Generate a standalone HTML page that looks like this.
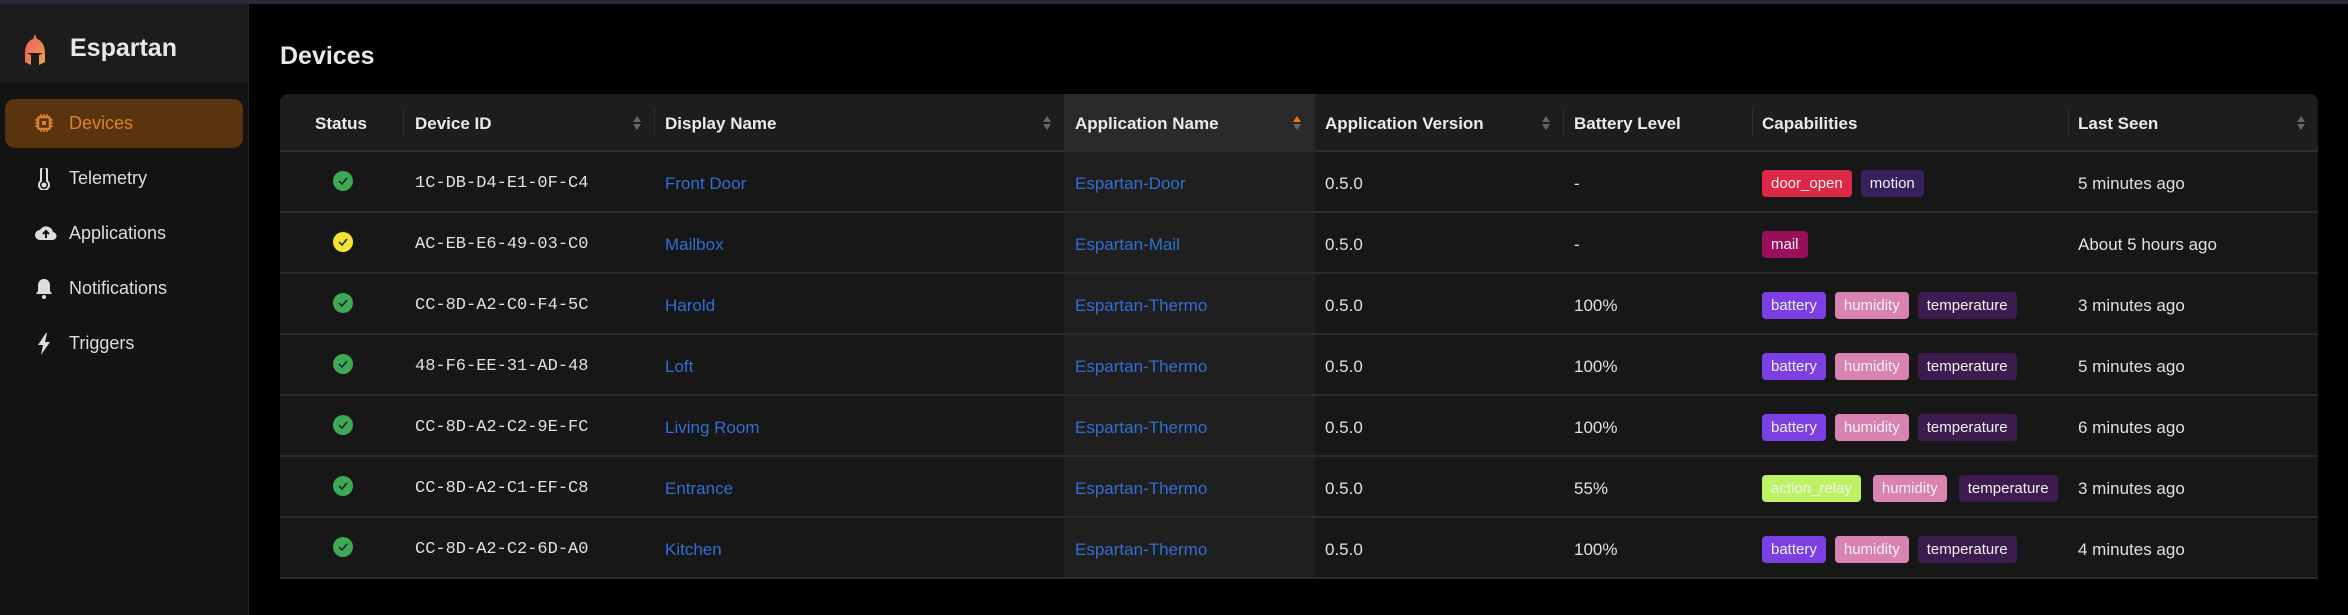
<!DOCTYPE html>
<html><head><meta charset="utf-8"><style>
*{box-sizing:border-box;margin:0;padding:0}
body{width:2348px;height:615px;background:#000;font-family:"Liberation Sans",sans-serif;color:#e5e5e5;position:relative;overflow:hidden}
.topbar{position:absolute;left:0;top:0;width:2348px;height:4px;background:#2b2a36}
.side{position:absolute;left:0;top:4px;width:249px;height:611px;background:#131313;border-right:1px solid #222}
.sh{height:79px;background:#1c1c1c;position:relative}
.sh .t{position:absolute;left:70px;top:30px;font-size:25px;font-weight:bold;color:#e8e8e8}
.nav{position:absolute;left:5px;width:238px;height:49px;border-radius:10px;font-size:18px;color:#ddd}
.nav span{position:absolute;left:64px;top:14px}
.nav svg{position:absolute;left:30px;top:14px}
.nav.act{background:#5a340f;color:#d9822b}
h1{position:absolute;left:280px;top:42px;font-size:25px;font-weight:bold;color:#e8e8e8}
.tbl{position:absolute;left:280px;top:94px;width:2038px;height:485px;background:#171717;border-radius:8px 8px 0 0;overflow:hidden}
.hl{position:absolute;left:784px;top:0;width:251px;height:485px;background:#1f1f1f}
.hdr{position:absolute;left:0;top:0;width:2038px;height:58px;background:#1d1d1d;border-bottom:2px solid #2e2e2e}
.hdr .hlh{position:absolute;left:784px;top:0;width:251px;height:58px;background:#2a2a2a}
.c{position:absolute;font-size:17px;white-space:nowrap}
.hdr .c{font-weight:bold;top:20px;color:#eaeaea}
.dv{position:absolute;top:15px;width:1px;height:28px;background:#2c2c2c}
.sort{position:absolute;top:21px;width:10px;height:16px}
.row{position:absolute;left:0;width:2038px;height:61px;border-bottom:2px solid #2a2a2a}
.row .c{top:22px;color:#e0e0e0}
.mono{font-family:"Liberation Mono",monospace;font-size:17px}
a{color:#2f6fd3;text-decoration:none}
.b{display:inline-block;height:27px;line-height:27px;padding:0 9px;border-radius:4px;font-size:15px;color:#f0f0f0;margin-right:9px;position:relative;top:-4px}
.st{position:absolute;left:53px;top:19px}
</style></head><body>
<div class="topbar"></div>
<div class="side">
 <div class="sh">
  <svg style="position:absolute;left:24px;top:30px" width="22" height="32" viewBox="0 0 22 32"><defs><linearGradient id="g" x1="0" y1="0" x2="1" y2="1"><stop offset="0" stop-color="#e85d5d"/><stop offset="1" stop-color="#f0a050"/></linearGradient></defs><path d="M11 0 L13 5 C19 7 21 13 21 20 L21 28 L15 31 L15 21 L19 19 L3 19 L7 21 L7 31 L1 28 L1 20 C1 13 3 7 9 5 Z" fill="url(#g)"/></svg>
  <div class="t">Espartan</div>
 </div>
 <div class="nav act" style="top:95px"><svg width="18" height="20" viewBox="0 0 18 20"><rect x="3" y="4" width="12" height="12" rx="2" fill="none" stroke="#d9822b" stroke-width="2.5"/><rect x="7" y="8" width="4" height="4" fill="#d9822b"/><path d="M6 1v3M9 1v3M12 1v3M6 16v3M9 16v3M12 16v3M0 7h3M0 10h3M0 13h3M15 7h3M15 10h3M15 13h3" stroke="#d9822b" stroke-width="1.5"/></svg><span>Devices</span></div>
 <div class="nav" style="top:150px"><svg width="18" height="22" viewBox="0 0 18 22"><path d="M6 2a3 3 0 0 1 6 0v11a5 5 0 1 1-6 0z" fill="none" stroke="#ddd" stroke-width="2"/><circle cx="9" cy="17" r="2.5" fill="#ddd"/></svg><span>Telemetry</span></div>
 <div class="nav" style="top:205px"><svg width="22" height="20" viewBox="0 0 22 20"><path d="M5 17a5 5 0 0 1 0-10a7 7 0 0 1 13 2a4 4 0 0 1-1 8z" fill="#ddd"/><path d="M11 15v-6M8 11l3-3 3 3" stroke="#131313" stroke-width="2" fill="none"/></svg><span>Applications</span></div>
 <div class="nav" style="top:260px"><svg width="18" height="22" viewBox="0 0 18 22"><path d="M9 1c4 0 6 3 6 7v5l2 3H1l2-3V8c0-4 2-7 6-7z" fill="#ddd"/><circle cx="9" cy="19" r="2" fill="#ddd"/></svg><span>Notifications</span></div>
 <div class="nav" style="top:315px"><svg width="18" height="22" viewBox="0 0 18 22"><path d="M11 0L3 12h5l-2 10 9-13h-5l2-9z" fill="#ddd"/></svg><span>Triggers</span></div>
</div>
<h1>Devices</h1>
<div class="tbl">
 <div class="hl"></div>
 <div class="hdr"><div class="hlh"></div>
  <div class="c" style="left:35px">Status</div>
  <div class="dv" style="left:123px"></div><div class="c" style="left:135px">Device ID</div>
  <svg class="sort" style="left:352px" viewBox="0 0 10 16"><path d="M5 1l4 6H1z" fill="#666"/><path d="M5 15l4-6H1z" fill="#666"/></svg>
  <div class="dv" style="left:374px"></div><div class="c" style="left:385px">Display Name</div>
  <svg class="sort" style="left:762px" viewBox="0 0 10 16"><path d="M5 1l4 6H1z" fill="#666"/><path d="M5 15l4-6H1z" fill="#666"/></svg>
  <div class="c" style="left:795px">Application Name</div>
  <svg class="sort" style="left:1012px" viewBox="0 0 10 16"><path d="M5 1l4 6H1z" fill="#e07b1a"/><path d="M5 15l4-6H1z" fill="#666"/></svg>
  <div class="c" style="left:1045px">Application Version</div>
  <svg class="sort" style="left:1261px" viewBox="0 0 10 16"><path d="M5 1l4 6H1z" fill="#666"/><path d="M5 15l4-6H1z" fill="#666"/></svg>
  <div class="dv" style="left:1283px"></div><div class="c" style="left:1294px">Battery Level</div>
  <div class="dv" style="left:1472px"></div><div class="c" style="left:1482px">Capabilities</div>
  <div class="dv" style="left:1788px"></div><div class="c" style="left:1798px">Last Seen</div>
  <svg class="sort" style="left:2016px" viewBox="0 0 10 16"><path d="M5 1l4 6H1z" fill="#666"/><path d="M5 15l4-6H1z" fill="#666"/></svg>
 </div>
 <div class="row" style="top:58px"><svg class="st" width="20" height="20"><circle cx="10" cy="10" r="10" fill="#3ea853"/><path d="M6 10l3 3 5-6" stroke="#123" stroke-width="1.5" fill="none"/></svg><div class="c mono" style="left:135px">1C-DB-D4-E1-0F-C4</div><div class="c" style="left:385px"><a>Front Door</a></div><div class="c" style="left:795px"><a>Espartan-Door</a></div><div class="c" style="left:1045px">0.5.0</div><div class="c" style="left:1294px">-</div><div class="c" style="left:1482px"><span class="b" style="background:#dc2846">door_open</span><span class="b" style="background:#36205e">motion</span></div><div class="c" style="left:1798px">5 minutes ago</div></div>
 <div class="row" style="top:119px"><svg class="st" width="20" height="20"><circle cx="10" cy="10" r="10" fill="#f3e234"/><path d="M6 10l3 3 5-6" stroke="#123" stroke-width="1.5" fill="none"/></svg><div class="c mono" style="left:135px">AC-EB-E6-49-03-C0</div><div class="c" style="left:385px"><a>Mailbox</a></div><div class="c" style="left:795px"><a>Espartan-Mail</a></div><div class="c" style="left:1045px">0.5.0</div><div class="c" style="left:1294px">-</div><div class="c" style="left:1482px"><span class="b" style="background:#9a0f5c">mail</span></div><div class="c" style="left:1798px">About 5 hours ago</div></div>
 <div class="row" style="top:180px"><svg class="st" width="20" height="20"><circle cx="10" cy="10" r="10" fill="#3ea853"/><path d="M6 10l3 3 5-6" stroke="#123" stroke-width="1.5" fill="none"/></svg><div class="c mono" style="left:135px">CC-8D-A2-C0-F4-5C</div><div class="c" style="left:385px"><a>Harold</a></div><div class="c" style="left:795px"><a>Espartan-Thermo</a></div><div class="c" style="left:1045px">0.5.0</div><div class="c" style="left:1294px">100%</div><div class="c" style="left:1482px"><span class="b" style="background:#7b3fe4">battery</span><span class="b" style="background:#d883b0">humidity</span><span class="b" style="background:#3c1c4f">temperature</span></div><div class="c" style="left:1798px">3 minutes ago</div></div>
 <div class="row" style="top:241px"><svg class="st" width="20" height="20"><circle cx="10" cy="10" r="10" fill="#3ea853"/><path d="M6 10l3 3 5-6" stroke="#123" stroke-width="1.5" fill="none"/></svg><div class="c mono" style="left:135px">48-F6-EE-31-AD-48</div><div class="c" style="left:385px"><a>Loft</a></div><div class="c" style="left:795px"><a>Espartan-Thermo</a></div><div class="c" style="left:1045px">0.5.0</div><div class="c" style="left:1294px">100%</div><div class="c" style="left:1482px"><span class="b" style="background:#7b3fe4">battery</span><span class="b" style="background:#d883b0">humidity</span><span class="b" style="background:#3c1c4f">temperature</span></div><div class="c" style="left:1798px">5 minutes ago</div></div>
 <div class="row" style="top:302px"><svg class="st" width="20" height="20"><circle cx="10" cy="10" r="10" fill="#3ea853"/><path d="M6 10l3 3 5-6" stroke="#123" stroke-width="1.5" fill="none"/></svg><div class="c mono" style="left:135px">CC-8D-A2-C2-9E-FC</div><div class="c" style="left:385px"><a>Living Room</a></div><div class="c" style="left:795px"><a>Espartan-Thermo</a></div><div class="c" style="left:1045px">0.5.0</div><div class="c" style="left:1294px">100%</div><div class="c" style="left:1482px"><span class="b" style="background:#7b3fe4">battery</span><span class="b" style="background:#d883b0">humidity</span><span class="b" style="background:#3c1c4f">temperature</span></div><div class="c" style="left:1798px">6 minutes ago</div></div>
 <div class="row" style="top:363px"><svg class="st" width="20" height="20"><circle cx="10" cy="10" r="10" fill="#3ea853"/><path d="M6 10l3 3 5-6" stroke="#123" stroke-width="1.5" fill="none"/></svg><div class="c mono" style="left:135px">CC-8D-A2-C1-EF-C8</div><div class="c" style="left:385px"><a>Entrance</a></div><div class="c" style="left:795px"><a>Espartan-Thermo</a></div><div class="c" style="left:1045px">0.5.0</div><div class="c" style="left:1294px">55%</div><div class="c" style="left:1482px"><span class="b" style="background:#bef264;margin-right:12px">action_relay</span><span class="b" style="background:#d883b0;margin-right:12px">humidity</span><span class="b" style="background:#3c1c4f">temperature</span></div><div class="c" style="left:1798px">3 minutes ago</div></div>
 <div class="row" style="top:424px"><svg class="st" width="20" height="20"><circle cx="10" cy="10" r="10" fill="#3ea853"/><path d="M6 10l3 3 5-6" stroke="#123" stroke-width="1.5" fill="none"/></svg><div class="c mono" style="left:135px">CC-8D-A2-C2-6D-A0</div><div class="c" style="left:385px"><a>Kitchen</a></div><div class="c" style="left:795px"><a>Espartan-Thermo</a></div><div class="c" style="left:1045px">0.5.0</div><div class="c" style="left:1294px">100%</div><div class="c" style="left:1482px"><span class="b" style="background:#7b3fe4">battery</span><span class="b" style="background:#d883b0">humidity</span><span class="b" style="background:#3c1c4f">temperature</span></div><div class="c" style="left:1798px">4 minutes ago</div></div>
</div>
</body></html>
